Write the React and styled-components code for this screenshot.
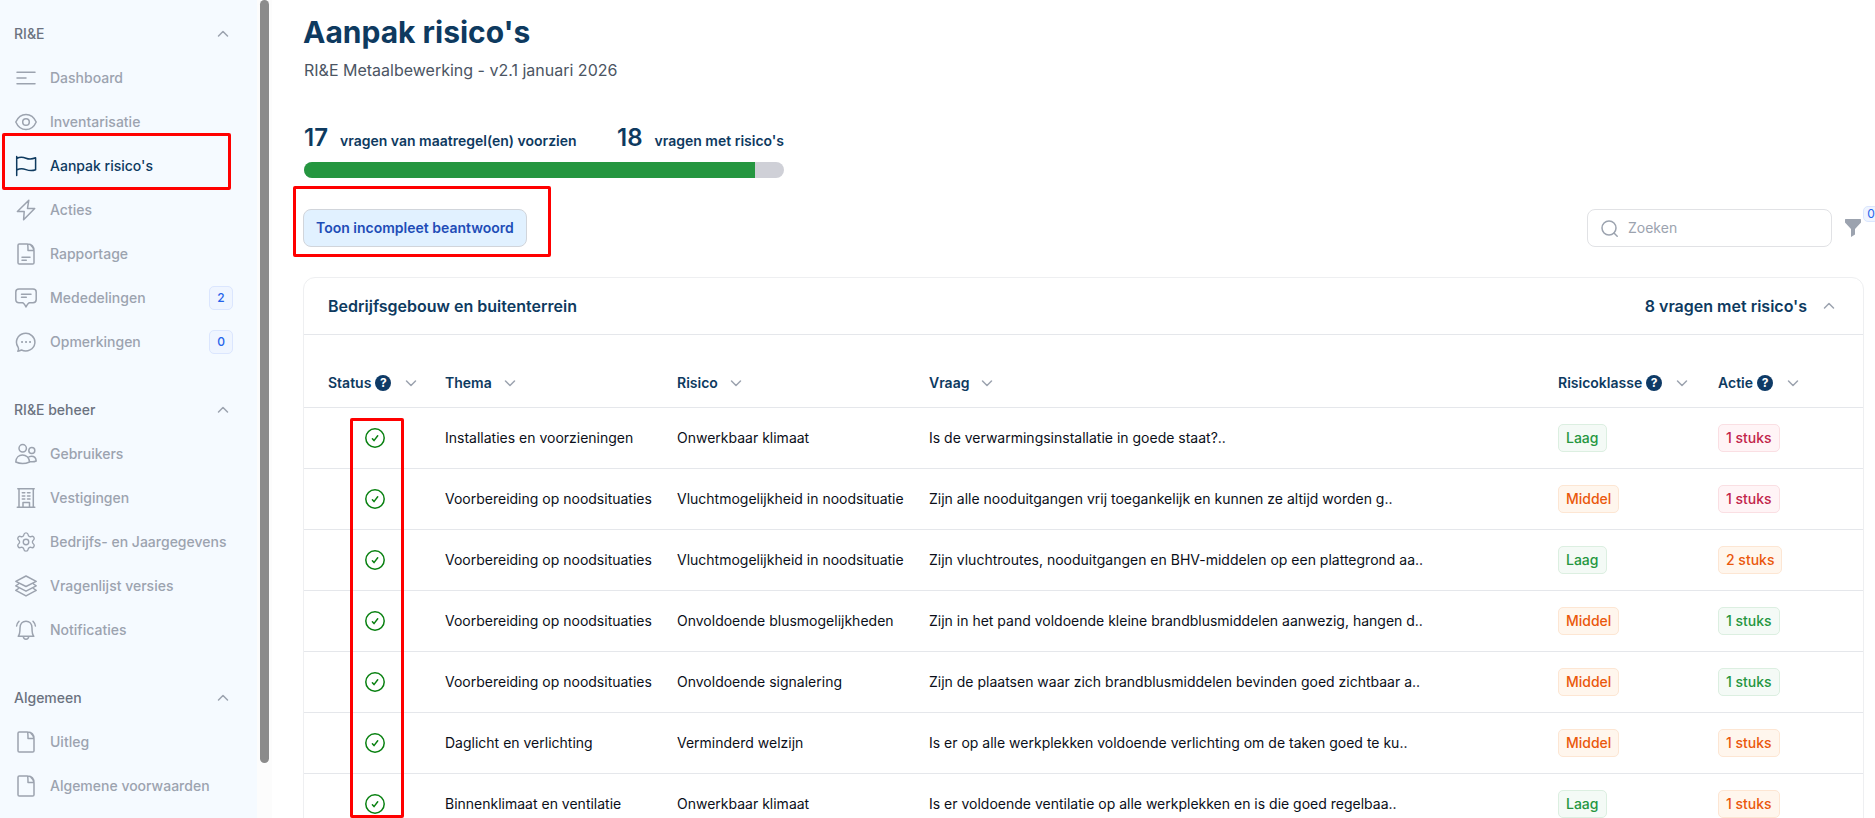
import styled, { createGlobalStyle } from 'styled-components';
import { useState } from 'react';
import { Settings } from 'lucide-react';

const GlobalStyle = createGlobalStyle`
  * {
    box-sizing: border-box;
  }
  body {
    margin: 0;
    background-color: white;
    font-family: Inter, 'Liberation Sans', sans-serif;
    font-size: 14px;
    line-height: 20px;
    color: #0b0f19;
    overflow: hidden;
  }
  button, input {
    font: inherit;
  }
  h1, h2, p, ul {
    margin: 0;
    padding: 0;
  }
`;

const Layout = styled.div`
  display: flex;
  height: 100vh;
  overflow: hidden;
`;

/* sidebar */
const Sidebar = styled.aside`
  flex: none;
  width: 257px;
  padding: 12px 24px 0 14px;
  background-color: #f5faff;
  overflow: hidden;
`;

const Track = styled.div`
  flex: none;
  width: 15px;
  padding: 0 3px;
  background-color: #fcfcfc;
`;

const Thumb = styled.div`
  width: 9px;
  height: 93.3%;
  border-radius: 5px;
  background-color: #8b8b8b;
`;

const Group = styled.section`
  margin-bottom: 24px;
`;

const GroupToggle = styled.button`
  display: flex;
  align-items: center;
  justify-content: space-between;
  width: 100%;
  height: 44px;
  padding: 0 4px 0 0;
  border: 0;
  background: none;
  font-weight: 500;
  color: #6b7280;
`;

const Menu = styled.ul`
  list-style: none;
`;

const MenuItem = styled.li`
  position: relative;
`;

const MenuLink = styled.a`
  display: flex;
  align-items: center;
  gap: 13px;
  height: 44px;
  padding-left: 1px;
  text-decoration: none;
  white-space: nowrap;
  font-weight: 500;
  color: ${({ $active }) => ($active ? '#0e3a5f' : '#9ca3af')};
`;

const Count = styled.span`
  display: flex;
  align-items: center;
  justify-content: center;
  width: 24px;
  height: 24px;
  margin-left: auto;
  border: 1px solid #dbe6fe;
  border-radius: 5px;
  background-color: #eff5ff;
  font-size: 12px;
  color: #2563eb;
`;

const Mark = styled.div`
  position: absolute;
  border: 3px solid #ff0000;
  border-radius: 2px;
  pointer-events: none;
`;

const MenuMark = styled(Mark)`
  inset: -11px 2px -2px -12px;
`;

const ButtonMark = styled(Mark)`
  inset: -23px -24px -10px -10px;
`;

const StatusMark = styled(Mark)`
  top: 140px;
  left: 46px;
  width: 54px;
  height: 400px;
`;

/* page */
const Main = styled.main`
  flex: 1;
  min-width: 0;
  padding: 12px 11px 0 31px;
`;

const Title = styled.h1`
  font-size: 30px;
  line-height: 40px;
  font-weight: 700;
  color: #0e3a5f;
`;

const Subtitle = styled.p`
  margin-top: 6px;
  padding-left: 1px;
  font-size: 16px;
  line-height: 24px;
  color: #4b5563;
`;

const Progress = styled.section`
  width: 481px;
  margin-top: 40px;
  padding-left: 1px;
`;

const Stats = styled.div`
  display: flex;
  justify-content: space-between;
`;

const Stat = styled.p`
  display: flex;
  align-items: baseline;
  gap: 12px;
  line-height: 32px;
  font-weight: 600;
  color: #0e3a5f;
`;

const Amount = styled.span`
  font-size: 24px;
`;

const Bar = styled.div`
  height: 16px;
  margin-top: 5px;
  border-radius: 8px;
  background-color: #cfd0d7;
  overflow: hidden;
`;

const Fill = styled.div`
  height: 100%;
  background-color: #259640;
`;

const Toolbar = styled.div`
  display: flex;
  align-items: center;
  justify-content: space-between;
  margin-top: 31px;
`;

const Marked = styled.div`
  position: relative;
`;

const FilterButton = styled.button`
  display: block;
  height: 38px;
  padding: 0 12px;
  border: 1px solid #d1d5db;
  border-radius: 8px;
  background-color: #e1f1ff;
  font-weight: 600;
  color: #1e4db7;
`;

const Tools = styled.div`
  display: flex;
  align-items: center;
  gap: 13px;
  margin-right: 3px;
`;

const Search = styled.label`
  display: flex;
  align-items: center;
  gap: 10px;
  width: 245px;
  height: 38px;
  padding: 0 13px;
  border: 1px solid #e1e2e5;
  border-radius: 8px;
  color: #9ca3af;
`;

const SearchInput = styled.input`
  flex: 1;
  min-width: 0;
  padding: 0;
  border: 0;
  outline: 0;
  background: none;
  color: #0b0f19;
  &::placeholder {
    color: #9ca3af;
    opacity: 1;
  }
`;

const FunnelButton = styled.button`
  position: relative;
  display: flex;
  padding: 0;
  border: 0;
  background: none;
  color: #9ca3af;
`;

const FunnelCount = styled.span`
  position: absolute;
  left: 18px;
  top: -13px;
  width: 16px;
  height: 16px;
  border: 1px solid #dbe6fe;
  border-radius: 5px;
  background-color: #eff5ff;
  font-size: 12px;
  line-height: 14px;
  color: #2563eb;
`;

const Card = styled.section`
  position: relative;
  margin-top: 30px;
  border: 1px solid #eeeff1;
  border-radius: 12px;
`;

const CardHeader = styled.header`
  display: flex;
  align-items: center;
  justify-content: space-between;
  height: 57px;
  padding: 0 28px 0 24px;
  border-bottom: 1px solid #e5e7eb;
  font-size: 16px;
  font-weight: 600;
  color: #0e3a5f;
`;

const CardTitle = styled.h2`
  font-size: 16px;
  font-weight: 600;
`;

const CardToggle = styled.button`
  display: flex;
  align-items: center;
  gap: 16px;
  padding: 0;
  border: 0;
  background: none;
  color: #0e3a5f;
`;

const Table = styled.table`
  width: 100%;
  table-layout: fixed;
  border-collapse: separate;
  border-spacing: 0;
`;

const Th = styled.th`
  width: ${({ $width }) => $width || 'auto'};
  height: 73px;
  padding: 24px 0 0;
  border-bottom: 1px solid #e5e7eb;
  text-align: left;
  &:first-child {
    padding-left: 24px;
  }
`;

const HeadCell = styled.div`
  display: flex;
  align-items: center;
  font-weight: 600;
  color: #0e3a5f;
`;

const Help = styled.button`
  width: 16px;
  height: 16px;
  margin: 0 2px 0 4px;
  padding: 0;
  border: 0;
  border-radius: 50%;
  background-color: #0e3a66;
  font-size: 12px;
  line-height: 16px;
  font-weight: 700;
  color: white;
`;

const Sort = styled.button`
  display: flex;
  margin-left: 12px;
  padding: 0;
  border: 0;
  background: none;
`;

const Td = styled.td`
  height: 61px;
  padding: 0;
  border-bottom: 1px solid #e5e7eb;
  white-space: nowrap;
  &:first-child {
    padding: 0 23px;
  }
  svg {
    display: block;
    margin: 0 auto;
  }
`;

const tones = {
  green: { color: '#259640', bg: '#f4faf6', border: '#dcefe1' },
  orange: { color: '#ea580c', bg: '#fff6ed', border: '#fde6d3' },
  red: { color: '#c2254a', bg: '#fff4f6', border: '#fadfe3' },
};

const Pill = styled.span`
  display: inline-block;
  height: 28px;
  padding: 0 7px;
  border: 1px solid ${({ $tone }) => tones[$tone].border};
  border-radius: 5px;
  background-color: ${({ $tone }) => tones[$tone].bg};
  font-weight: 500;
  line-height: 26px;
  vertical-align: middle;
  color: ${({ $tone }) => tones[$tone].color};
`;

/* icons */
const page = 'M12.5 1H4.3Q3 1 3 2.3V19.7Q3 21 4.3 21H17.7Q19 21 19 19.7V8Q19 1 12.5 1ZM12.5 1Q13 2 13 7.5H19Q18.6 4.6 16 2.4';

const shapes = {
  dashboard: <path d='M2 5.2H20M2 11H11M2 16.8H20' />,
  eye: (
    <>
      <path d='M.8 11C3 6 6.6 3.4 11 3.4S19 6 21.2 11C19 16 15.4 18.6 11 18.6S3 16 .8 11Z' />
      <circle cx='11' cy='11' r='3.3' />
    </>
  ),
  flag: <path d='M1.7 1.5V20.5M1.7 3.5C5 1.6 8 2 11 3.2S17 4.3 20.6 2.8V14.7C17 16.2 14 15.7 11 14.6S5 13.3 1.7 15' />,
  bolt: <path d='M13.8 1.2L2.4 12.5H9.2L8.6 20.8L19.7 9.5H12.5Z' />,
  report: <path d={page + 'M7 14.2H15M7 17.2H11.3'} />,
  message: <path d='M4 2H18Q21.2 2 21.2 5V12.5Q21.2 15.7 18 15.7H14.2Q12.5 16.5 11 20Q9.5 16.5 7.8 15.7H4Q.8 15.7 .8 12.5V5Q.8 2 4 2ZM6.5 7.2H16M6.5 10.2H11.3' />,
  comment: (
    <>
      <path d='M2.8 20.2C4 18.5 3.8 17.5 3 16A9.2 8.8 0 1 1 6.5 19C5 19.8 4.5 20 2.8 20.2Z' />
      <path d='M6.9 11H7.2M10.9 11H11.2M14.9 11H15.2' strokeWidth='1.8' />
    </>
  ),
  users: (
    <>
      <circle cx='7.7' cy='5.3' r='3.7' />
      <circle cx='16.8' cy='7.5' r='3' />
      <path d='M.8 19C1 14.5 4 11.9 7.5 11.9S14.3 14.5 14.6 19C10 21 5 21 .8 19ZM13 14.5C14 13.5 15.2 13.2 16.5 13.2C19.5 13.2 21 15.5 21.2 18C19 19 17 19 14.6 18.6' />
    </>
  ),
  building: (
    <path d='M2.8 1.7H19.2M4 1.7V20.2M18.3 1.7V20.2M2.3 20.2H19.8M8 20.2V15.5H14.5V20.2M7.3 5.7H9.8M12.5 5.7H15M7.3 8.9H9.8M12.5 8.9H15M7.3 12H9.8M12.5 12H15' />
  ),
  layers: (
    <path d='M11 1L21.2 6.3L11 11.5L.8 6.3ZM3.5 9L.8 10.8L11 16.2L21.2 10.8L18.5 9M3.5 13.5L.8 15.4L11 20.9L21.2 15.4L18.5 13.5' />
  ),
  bell: (
    <path d='M3.2 17.2C5 15.5 5 13 5 9C5 5 7.5 2.2 11 2.2S17 5 17 9C17 13 17 15.5 18.8 17.2ZM8.3 17.5C8.6 21.2 13.4 21.2 13.7 17.5M4 2.2C2.6 3.6 1.8 5 1.6 7M18 2.2C19.4 3.6 20.2 5 20.4 7' />
  ),
  file: <path d={page} />,
};

const Icon = ({ name }) => {
  if (name === 'gear') return <Settings size={22} strokeWidth={1.5} />;
  return (
    <svg width='22' height='22' viewBox='0 0 22 22' fill='none' stroke='currentColor' strokeWidth='1.5' strokeLinecap='round' strokeLinejoin='round'>
      {shapes[name]}
    </svg>
  );
};

const Chevron = ({ down }) => (
  <svg width='12' height='8' viewBox='0 0 12 8' fill='none' stroke='#9ca3af' strokeWidth='1.5' strokeLinecap='round' strokeLinejoin='round'>
    <path d={down ? 'M1.5 2L6 6.5L10.5 2' : 'M1.5 6L6 1.5L10.5 6'} />
  </svg>
);

const Check = () => (
  <svg width='20' height='20' viewBox='0 0 20 20' fill='none' stroke='#088010' strokeWidth='1.5' strokeLinecap='round' strokeLinejoin='round'>
    <circle cx='10' cy='10' r='9.2' />
    <path d='M7.4 10.8L9 12.6L12.7 7.8' />
  </svg>
);

const groups = [
  {
    title: 'RI&E',
    items: [
      { icon: 'dashboard', label: 'Dashboard' },
      { icon: 'eye', label: 'Inventarisatie' },
      { icon: 'flag', label: "Aanpak risico's", active: true },
      { icon: 'bolt', label: 'Acties' },
      { icon: 'report', label: 'Rapportage' },
      { icon: 'message', label: 'Mededelingen', count: 2 },
      { icon: 'comment', label: 'Opmerkingen', count: 0 },
    ],
  },
  {
    title: 'RI&E beheer',
    items: [
      { icon: 'users', label: 'Gebruikers' },
      { icon: 'building', label: 'Vestigingen' },
      { icon: 'gear', label: 'Bedrijfs- en Jaargegevens' },
      { icon: 'layers', label: 'Vragenlijst versies' },
      { icon: 'bell', label: 'Notificaties' },
    ],
  },
  {
    title: 'Algemeen',
    items: [
      { icon: 'file', label: 'Uitleg' },
      { icon: 'file', label: 'Algemene voorwaarden' },
    ],
  },
];

const columns = [
  { label: 'Status', width: '141px', help: true },
  { label: 'Thema', width: '232px' },
  { label: 'Risico', width: '252px' },
  { label: 'Vraag' },
  { label: 'Risicoklasse', width: '160px', help: true },
  { label: 'Actie', width: '145px', help: true },
];

const rows = [
  ['Installaties en voorzieningen', 'Onwerkbaar klimaat', 'Is de verwarmingsinstallatie in goede staat?..', 'Laag', 1, 'red'],
  ['Voorbereiding op noodsituaties', 'Vluchtmogelijkheid in noodsituatie', 'Zijn alle nooduitgangen vrij toegankelijk en kunnen ze altijd worden g..', 'Middel', 1, 'red'],
  ['Voorbereiding op noodsituaties', 'Vluchtmogelijkheid in noodsituatie', 'Zijn vluchtroutes, nooduitgangen en BHV-middelen op een plattegrond aa..', 'Laag', 2, 'orange'],
  ['Voorbereiding op noodsituaties', 'Onvoldoende blusmogelijkheden', 'Zijn in het pand voldoende kleine brandblusmiddelen aanwezig, hangen d..', 'Middel', 1, 'green'],
  ['Voorbereiding op noodsituaties', 'Onvoldoende signalering', 'Zijn de plaatsen waar zich brandblusmiddelen bevinden goed zichtbaar a..', 'Middel', 1, 'green'],
  ['Daglicht en verlichting', 'Verminderd welzijn', 'Is er op alle werkplekken voldoende verlichting om de taken goed te ku..', 'Middel', 1, 'orange'],
  ['Binnenklimaat en ventilatie', 'Onwerkbaar klimaat', 'Is er voldoende ventilatie op alle werkplekken en is die goed regelbaa..', 'Laag', 1, 'orange'],
];

const NavGroup = ({ title, items }) => {
  const [open, setOpen] = useState(true);

  return (
    <Group>
      <GroupToggle type='button' onClick={() => setOpen(!open)}>
        {title}
        <Chevron down={!open} />
      </GroupToggle>
      {open && (
        <Menu>
          {items.map(({ icon, label, active, count }) => (
            <MenuItem key={label}>
              <MenuLink href='#' $active={active}>
                <Icon name={icon} />
                {label}
                {count !== undefined && <Count>{count}</Count>}
              </MenuLink>
              {active && <MenuMark />}
            </MenuItem>
          ))}
        </Menu>
      )}
    </Group>
  );
};

const RiskTable = () => (
  <Table>
    <thead>
      <tr>
        {columns.map(({ label, width, help }) => (
          <Th key={label} $width={width}>
            <HeadCell>
              {label}
              {help && <Help type='button'>?</Help>}
              <Sort type='button' aria-label={`Sorteer op ${label}`}>
                <Chevron down />
              </Sort>
            </HeadCell>
          </Th>
        ))}
      </tr>
    </thead>
    <tbody>
      {rows.map(([theme, risk, question, level, actions, tone]) => (
        <tr key={question}>
          <Td>
            <Check />
          </Td>
          <Td>{theme}</Td>
          <Td>{risk}</Td>
          <Td>{question}</Td>
          <Td>
            <Pill $tone={level === 'Laag' ? 'green' : 'orange'}>{level}</Pill>
          </Td>
          <Td>
            <Pill $tone={tone}>{actions} stuks</Pill>
          </Td>
        </tr>
      ))}
    </tbody>
  </Table>
);

const App = () => {
  const [open, setOpen] = useState(true);
  const [query, setQuery] = useState('');

  return (
    <>
      <GlobalStyle />
      <Layout>
        <Sidebar>
          {groups.map((group) => (
            <NavGroup key={group.title} {...group} />
          ))}
        </Sidebar>
        <Track>
          <Thumb />
        </Track>
        <Main>
          <Title>Aanpak risico's</Title>
          <Subtitle>RI&E Metaalbewerking - v2.1 januari 2026</Subtitle>
          <Progress>
            <Stats>
              <Stat>
                <Amount>17</Amount> vragen van maatregel(en) voorzien
              </Stat>
              <Stat>
                <Amount>18</Amount> vragen met risico's
              </Stat>
            </Stats>
            <Bar>
              <Fill style={{ width: `${Math.floor((17 / 18) * 100)}%` }} />
            </Bar>
          </Progress>
          <Toolbar>
            <Marked>
              <FilterButton type='button'>Toon incompleet beantwoord</FilterButton>
              <ButtonMark />
            </Marked>
            <Tools>
              <Search>
                <svg width='17' height='17' viewBox='0 0 17 17' fill='none' stroke='currentColor' strokeWidth='1.5' strokeLinecap='round'>
                  <circle cx='8' cy='8' r='7' />
                  <path d='M13 13L16.2 16.2' />
                </svg>
                <SearchInput
                  type='text'
                  placeholder='Zoeken'
                  aria-label='Zoeken'
                  value={query}
                  onChange={(e) => setQuery(e.target.value)}
                />
              </Search>
              <FunnelButton type='button' aria-label='Filters'>
                <svg width='16' height='18' viewBox='0 0 16 18' fill='currentColor'>
                  <path d='M0 .5Q0 0 .6 0H15.4Q16 0 16 .5V3.5L10 10V15.5L6 18V10L0 3.5Z' />
                </svg>
                <FunnelCount>0</FunnelCount>
              </FunnelButton>
            </Tools>
          </Toolbar>
          <Card>
            <CardHeader>
              <CardTitle>Bedrijfsgebouw en buitenterrein</CardTitle>
              <CardToggle type='button' onClick={() => setOpen(!open)}>
                8 vragen met risico's
                <Chevron down={!open} />
              </CardToggle>
            </CardHeader>
            {open && <RiskTable />}
            {open && <StatusMark />}
          </Card>
        </Main>
      </Layout>
    </>
  );
};

export default App;
